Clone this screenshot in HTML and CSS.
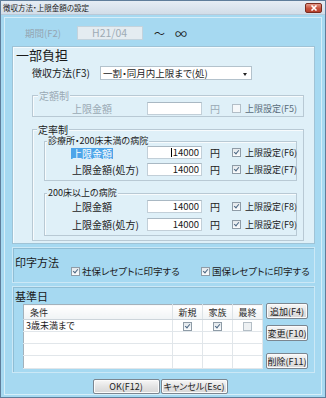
FILE: index.html
```html
<!DOCTYPE html>
<html lang="ja">
<head>
    <meta charset="UTF-8">
    <title>徴収方法・上限金額の設定</title>
    <link rel="stylesheet" href="styles.css">
</head>
<body>
<div class="window">
    <div class="titlebar">
        <span class="title">徴収方法・上限金額の設定</span>
        <span class="close">
            <svg width="8" height="6" viewBox="0 0 8 6"><path d="M1.5 0.5 L6.5 5.5 M6.5 0.5 L1.5 5.5" stroke="#fff" stroke-width="1.6"/></svg>
        </span>
    </div>
    <div class="client">
        <div class="period">
            <span class="period-label">期間(F2)</span>
            <span class="period-box">H21/04</span>
            <span class="tilde">〜</span>
            <span class="inf">∞</span>
        </div>

        <div class="panel burden">
            <div class="heading">一部負担</div>
            <div class="method-row">
                <span class="method-label">徴収方法(F3)</span>
                <span class="select">一割・同月内上限まで(処)<span class="arrow"></span></span>
            </div>

            <div class="group fixed">
                <div class="group-title muted">定額制</div>
                <div class="row outer-row">
                    <span class="row-label muted">上限金額</span>
                    <span class="amount"></span>
                    <span class="yen muted">円</span>
                    <span class="cb"></span>
                    <span class="cb-text">上限設定(F5)</span>
                </div>
            </div>

            <div class="group rate">
                <div class="group-title">定率制</div>
                <div class="group inner clinic">
                    <div class="group-title small">診療所・200床未満の病院</div>
                    <div class="row">
                        <span class="row-label"><span class="selected">上限金額</span></span>
                        <span class="amount"><span class="caret"></span>14000</span>
                        <span class="yen">円</span>
                        <span class="cb on"></span>
                        <span class="cb-text">上限設定(F6)</span>
                    </div>
                    <div class="row">
                        <span class="row-label">上限金額(処方)</span>
                        <span class="amount">14000</span>
                        <span class="yen">円</span>
                        <span class="cb on"></span>
                        <span class="cb-text">上限設定(F7)</span>
                    </div>
                </div>
                <div class="group inner hospital">
                    <div class="group-title small">200床以上の病院</div>
                    <div class="row">
                        <span class="row-label">上限金額</span>
                        <span class="amount">14000</span>
                        <span class="yen">円</span>
                        <span class="cb on"></span>
                        <span class="cb-text">上限設定(F8)</span>
                    </div>
                    <div class="row">
                        <span class="row-label">上限金額(処方)</span>
                        <span class="amount">14000</span>
                        <span class="yen">円</span>
                        <span class="cb on"></span>
                        <span class="cb-text">上限設定(F9)</span>
                    </div>
                </div>
            </div>
        </div>

        <div class="panel print">
            <span class="panel-label">印字方法</span>
            <span class="print-item first"><span class="cb on"></span><span class="print-text">社保レセプトに印字する</span></span>
            <span class="print-item"><span class="cb on"></span><span class="print-text">国保レセプトに印字する</span></span>
        </div>

        <div class="panel base">
            <div class="panel-label">基準日</div>
            <div class="base-body">
                <table class="grid">
                    <colgroup>
                        <col class="c-cond"><col class="c-flag"><col class="c-flag"><col class="c-flag">
                    </colgroup>
                    <tr class="head">
                        <th class="left">条件</th><th>新規</th><th>家族</th><th>最終</th>
                    </tr>
                    <tr>
                        <td class="left">3歳未満まで</td>
                        <td><span class="cb on"></span></td>
                        <td><span class="cb on"></span></td>
                        <td><span class="cb off"></span></td>
                    </tr>
                    <tr><td></td><td></td><td></td><td></td></tr>
                    <tr><td></td><td></td><td></td><td></td></tr>
                    <tr class="last"><td></td><td></td><td></td><td></td></tr>
                </table>
                <div class="side-buttons">
                    <span class="btn add">追加(F4)</span>
                    <span class="btn change">変更(F10)</span>
                    <span class="btn remove">削除(F11)</span>
                </div>
            </div>
        </div>

        <div class="footer">
            <span class="btn wide">OK(F12)</span>
            <span class="btn wide">キャンセル(Esc)</span>
        </div>
    </div>
</div>
</body>
</html>
```

FILE: styles.css
```css
*{
    box-sizing: border-box;
}
body{
    margin: 0;
    background: #ffffff;
    font-family: "Noto Sans CJK JP", "Noto Sans", sans-serif;
    font-feature-settings: "palt";
    color: #1a1a1a;
    white-space: nowrap;
}

.window{
    width: 326px;
    height: 398px;
    border: 1px solid #5f7d9a;
    background: #a6d9f1;
    display: flex;
    flex-direction: column;
    overflow: hidden;
}

/* title bar */
.titlebar{
    height: 14px;
    flex: none;
    display: flex;
    align-items: center;
    justify-content: space-between;
    padding: 0 3px 0 2px;
    background: linear-gradient(#e6edf4, #d2dde8);
    border-bottom: 1px solid #b9c9d8;
}
.title{
    font-size: 7.5px;
    line-height: 10px;
    color: #222;
}
.close{
    width: 17px;
    height: 10px;
    margin-top: 1px;
    border: 1px solid #7a2c1f;
    border-radius: 2px;
    background: linear-gradient(#e59a88, #c8523c 55%, #b5412c);
    display: flex;
    align-items: center;
    justify-content: center;
}

.client{
    flex: 1;
    margin: 2px 3px 2px 3px;
    border: 1px solid #d6eef9;
    padding: 8px 6px 0 7px;
    display: flex;
    flex-direction: column;
}

/* period */
.period{
    height: 14px;
    flex: none;
    display: flex;
    align-items: center;
    font-size: 10px;
}
.period-label{
    width: 52px;
    margin-left: 13px;
    color: #95a6b3;
    font-size: 9.5px;
}
.period-box{
    width: 66px;
    height: 14px;
    background: #e4ecf1;
    border: 1px solid #c3d3dd;
    color: #9eabb5;
    font-size: 10.5px;
    line-height: 12px;
    padding-left: 14px;
}
.tilde{
    margin-left: 11px;
    font-size: 11px;
}
.inf{
    margin-left: 10px;
    font-size: 12px;
}

/* panels */
.panel{
    flex: none;
    border: 1px solid #9fc3d6;
}
.burden{
    margin-top: 6px;
    height: 198px;
    background: #dff0f8;
    box-shadow: inset 1px 1px 0 #f4fbfe;
}
.heading{
    height: 16px;
    line-height: 16px;
    padding-left: 3px;
    font-size: 13px;
}
.method-row{
    margin-top: 3px;
    padding-left: 19px;
    height: 14px;
    display: flex;
    align-items: center;
}
.method-label{
    width: 68px;
    font-size: 10px;
    line-height: 14px;
}
.select{
    width: 152px;
    height: 14px;
    background: #ffffff;
    border: 1px solid #b3c2cc;
    font-size: 9.5px;
    line-height: 12px;
    padding-left: 2px;
    display: flex;
    align-items: center;
    justify-content: space-between;
    padding-right: 4px;
}
.arrow{
    width: 0;
    height: 0;
    border-left: 2.5px solid transparent;
    border-right: 2.5px solid transparent;
    border-top: 3px solid #222;
    margin-top: 2px;
}

/* group boxes */
.group{
    border: 1px solid #b8c9d4;
    box-shadow: inset 1px 1px 0 #f7fbfd;
    margin: 0 10px 0 19px;
}
.fixed{
    margin-top: 15px;
    padding-bottom: 1px;
}
.rate{
    margin-top: 12px;
    padding-bottom: 4px;
}
.group-title{
    width: fit-content;
    height: 12px;
    margin: -6px 0 0 4px;
    padding: 0 1px;
    background: #dff0f8;
    font-size: 10px;
    line-height: 12px;
}
.rate > .group-title{
    height: 11px;
    line-height: 11px;
}
.group-title.small{
    height: 10px;
    margin-left: 2px;
    font-size: 9px;
    line-height: 10px;
}
.fixed .group-title{
    margin-left: 5px;
}
.inner{
    margin: 0 6px 0 11px;
}
.clinic{
    margin-top: 6px;
    padding-bottom: 4px;
}
.hospital{
    margin-top: 12px;
    padding-bottom: 4px;
}
.muted{
    color: #9aa9b4;
}

.row{
    height: 13px;
    display: flex;
    align-items: center;
    padding-left: 27px;
}
.row > *{
    flex: none;
}
.outer-row{
    padding-left: 39px;
}
.clinic .row + .row{
    margin-top: 4px;
}
.hospital .row{
    margin-top: 2px;
}
.hospital .row + .row{
    margin-top: 5px;
}
.row-label{
    width: 75px;
    font-size: 10px;
    line-height: 13px;
}
.selected{
    display: inline-block;
    height: 11px;
    line-height: 11px;
    vertical-align: middle;
    background: #4ea5e9;
    color: #ffffff;
    padding: 0 1px;
    margin-left: -1px;
}
.amount{
    width: 55px;
    height: 13px;
    background: #ffffff;
    border: 1px solid #c2cfd8;
    border-top-color: #a9b8c3;
    font-size: 9.5px;
    line-height: 11px;
    text-align: right;
    padding-right: 2px;
}
.caret{
    display: inline-block;
    width: 1px;
    height: 9px;
    background: #000;
    margin-right: 1px;
    vertical-align: -1px;
}
.yen{
    width: 10px;
    margin-left: 8px;
    font-size: 10px;
    line-height: 13px;
}
.cb{
    display: inline-block;
    position: relative;
    flex: none;
    width: 9px;
    height: 9px;
    border: 1px solid #8f9ca7;
    background: linear-gradient(#e3e8ec, #fbfcfd);
}
.cb.on::after{
    content: "";
    position: absolute;
    left: 2px;
    top: 0px;
    width: 2px;
    height: 4px;
    border-right: 1.3px solid #4d6985;
    border-bottom: 1.3px solid #4d6985;
    transform: rotate(40deg);
}
.row .cb{
    margin-left: 12px;
}
.fixed .cb{
    background: #f5f8fa;
    border-color: #b2bec7;
}
.cb-text{
    margin-left: 4px;
    font-size: 9px;
    line-height: 13px;
}
.fixed .cb-text{
    color: #5a6c7a;
}

/* print */
.print{
    margin-top: 3px;
    height: 36px;
    display: flex;
    align-items: flex-start;
    padding: 7px 0 0 2px;
    border-color: #cbe8f6;
    box-shadow: inset 1px 1px 0 #8fbdd4;
}
.print > *{
    flex: none;
}
.panel-label{
    font-size: 11px;
    line-height: 14px;
}
.print-item{
    display: flex;
    align-items: center;
    margin-top: 10px;
    height: 12px;
}
.print-item.first{
    width: 130px;
    margin-left: 12px;
}
.print-text{
    margin-left: 2px;
    font-size: 9.5px;
    line-height: 12px;
}

/* base date */
.base{
    margin-top: 3px;
    height: 87px;
    padding: 2px 0 0 2px;
    border-color: #cbe8f6;
    box-shadow: inset 1px 1px 0 #8fbdd4;
}
.base-body{
    display: flex;
    margin-top: 1px;
    margin-left: 8px;
}
.grid{
    width: 239px;
    flex: none;
    border-collapse: collapse;
    table-layout: fixed;
    background: #ffffff;
    border: 1px solid #a3b1bb;
    font-size: 9px;
}
.c-cond{
    width: 149px;
}
.c-flag{
    width: 30px;
}
.grid th{
    height: 15px;
    font-weight: normal;
    line-height: 13px;
    padding: 0;
    color: #2a2a2a;
    background: linear-gradient(#ffffff, #f0f3f5);
    border-right: 1px solid #dde3e7;
    border-bottom: 1px solid #cdd5db;
}
.grid td{
    height: 12px;
    padding: 0;
    line-height: 11px;
    text-align: center;
    border-right: 1px solid #e1e6ea;
    border-bottom: 1px solid #e1e6ea;
}
.grid .left{
    text-align: left;
    padding-left: 6px;
}
.grid td.left{
    padding-left: 2px;
}
.grid .cb{
    vertical-align: middle;
    margin-top: -1px;
}
.grid .cb.off{
    background: #eef1f3;
    border-color: #b4bec6;
}
.grid .last td{
    height: 13px;
}

.side-buttons{
    display: flex;
    flex-direction: column;
    margin-left: 3px;
    margin-top: -1px;
}
.btn{
    display: flex;
    align-items: center;
    justify-content: center;
    height: 16px;
    border: 1px solid #7b8690;
    border-radius: 2px;
    background: linear-gradient(#f7f7f7, #e4e4e4 50%, #d6d6d6);
    box-shadow: inset 0 0 0 1px #fbfbfb;
    font-size: 9px;
    color: #222;
}
.side-buttons .btn{
    width: 42px;
}
.change{
    margin-top: 6px;
}
.remove{
    margin-top: 12px;
}

/* footer */
.footer{
    margin-top: 6px;
    flex: none;
    display: flex;
    justify-content: center;
    gap: 1px;
    padding-right: 7px;
}
.btn.wide{
    width: 67px;
    height: 15px;
}
```
